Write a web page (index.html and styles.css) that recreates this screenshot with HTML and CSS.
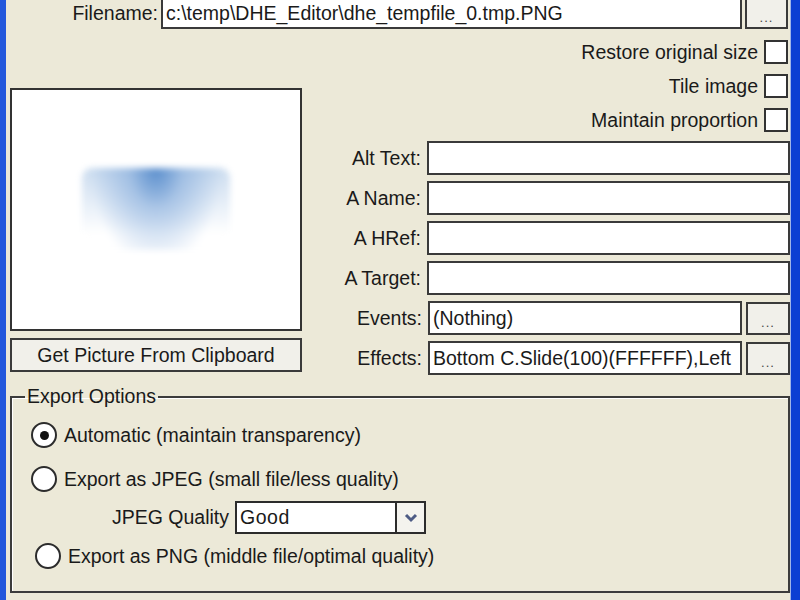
FILE: index.html
```html
<!DOCTYPE html>
<html lang="en">
<head>
    <meta charset="UTF-8">
    <title>Image Properties</title>
    <link rel="stylesheet" href="styles.css">
</head>
<body>
    <div class="window">
        <div class="file-row">
            <label class="lbl file-lbl">Filename:</label>
            <div class="field file-field">c:\temp\DHE_Editor\dhe_tempfile_0.tmp.PNG</div>
            <button class="btn dots">...</button>
        </div>

        <div class="main">
            <div class="left">
                <div class="preview"><div class="thumb"></div></div>
                <button class="btn clip">Get Picture From Clipboard</button>
            </div>

            <div class="right">
                <div class="checks">
                    <label class="check">Restore original size <span class="box"></span></label>
                    <label class="check">Tile image <span class="box"></span></label>
                    <label class="check">Maintain proportion <span class="box"></span></label>
                </div>

                <div class="fields">
                    <div class="frow"><span class="lbl">Alt Text:</span><div class="field"></div></div>
                    <div class="frow"><span class="lbl">A Name:</span><div class="field"></div></div>
                    <div class="frow"><span class="lbl">A HRef:</span><div class="field"></div></div>
                    <div class="frow"><span class="lbl">A Target:</span><div class="field"></div></div>
                    <div class="frow with-btn">
                        <span class="lbl">Events:</span>
                        <div class="field">(Nothing)</div>
                        <button class="btn dots">...</button>
                    </div>
                    <div class="frow with-btn">
                        <span class="lbl">Effects:</span>
                        <div class="field">Bottom C.Slide(100)(FFFFFF),Left</div>
                        <button class="btn dots">...</button>
                    </div>
                </div>
            </div>
        </div>

        <fieldset class="export">
            <legend>Export Options</legend>
            <label class="radio r-auto"><span class="circle checked"></span>Automatic (maintain transparency)</label>
            <label class="radio r-jpeg"><span class="circle"></span>Export as JPEG (small file/less quality)</label>
            <div class="quality">
                <span>JPEG Quality</span>
                <div class="combo">
                    <span class="combo-text">Good</span>
                    <span class="combo-btn">
                        <svg width="14" height="10" viewBox="0 0 14 10"><path d="M2 2 L7 7 L12 2" fill="none" stroke="#4d5b85" stroke-width="3"/></svg>
                    </span>
                </div>
            </div>
            <label class="radio r-png"><span class="circle"></span>Export as PNG (middle file/optimal quality)</label>
        </fieldset>
    </div>
</body>
</html>
```

FILE: styles.css
```css
body {
    margin: 0;
    background: #ece9d8;
    font-family: "Liberation Sans", Arial, sans-serif;
    font-size: 19.5px;
    color: #1a1a1a;
    overflow: hidden;
}
.window {
    height: 600px;
    box-sizing: border-box;
    background: #ece9d8;
    border-left: 6px solid #2358dc;
    border-right: 9px solid #0b3ed3;
    box-shadow: inset -1px 0 0 #9fb4e8;
    padding: 0 1px 0 4px;
    display: flex;
    flex-direction: column;
}

/* shared controls */
.lbl {
    text-align: right;
    white-space: nowrap;
}
.field {
    background: #fff;
    border: 2px solid #3a3a3a;
    box-sizing: border-box;
    height: 33px;
    padding: 0 4px 0 3px;
    display: flex;
    align-items: center;
    white-space: nowrap;
    overflow: hidden;
}
.btn {
    font-family: inherit;
    font-size: 19.5px;
    color: #1a1a1a;
    background: #f1f0ea;
    border: 2px solid #3a3a3a;
    box-sizing: border-box;
    padding: 0;
    margin: 0;
}
.dots {
    width: 44px;
    height: 33px;
    font-size: 13px;
    color: #444;
    letter-spacing: 1px;
    padding-top: 8px;
}

/* filename */
.file-row {
    display: flex;
    align-items: center;
    margin-top: -3px;
    height: 32px;
}
.file-lbl {
    width: 148px;
    margin-right: 3px;
}
.file-field {
    width: 581px;
    height: 32px;
    margin-right: 3px;
}
.file-row .dots {
    height: 31px;
    width: 43px;
}

/* preview + properties */
.main {
    display: grid;
    grid-template-columns: 292px 1fr;
    margin-top: 11px;
}
.left {
    padding-top: 48px;
    display: flex;
    flex-direction: column;
    gap: 7px;
}
.preview {
    height: 243px;
    background: #fff;
    border: 2px solid #333;
    box-sizing: border-box;
    display: flex;
    align-items: center;
    justify-content: center;
}
.thumb {
    width: 148px;
    height: 82px;
    margin-top: -2px;
    border-radius: 10px 10px 16px 16px;
    background:
        radial-gradient(ellipse 45% 120% at 50% 0%, rgba(84, 138, 203, 0.95) 0%, rgba(120, 163, 216, 0.55) 40%, rgba(255, 255, 255, 0) 100%),
        linear-gradient(to bottom, #cbdcef 0%, #e4edf7 40%, #ffffff 80%);
    filter: blur(3px);
}
.clip {
    height: 34px;
    width: 292px;
}

.checks {
    display: flex;
    flex-direction: column;
    align-items: flex-end;
    gap: 10px;
    padding-right: 2px;
}
.check {
    display: flex;
    align-items: center;
    gap: 6px;
    height: 24px;
}
.box {
    width: 24px;
    height: 24px;
    box-sizing: border-box;
    background: #fff;
    border: 2px solid #333;
}

.fields {
    margin-top: 9px;
    display: flex;
    flex-direction: column;
    gap: 6px;
}
.frow {
    display: grid;
    grid-template-columns: 1fr 363px;
    column-gap: 6px;
    align-items: center;
}
.frow.with-btn {
    grid-template-columns: 1fr 314px 44px;
    column-gap: 4px;
}
.frow.with-btn .lbl {
    margin-right: 2px;
}
.frow .field {
    height: 34px;
}

/* export group */
.export {
    margin: 10px 0 0 0;
    padding: 14px 0 0 19px;
    height: 208px;
    box-sizing: border-box;
    border: 2px solid #3c3c3c;
    box-shadow: inset 1px 1px 0 #fff;
    width: 780px;
}
.export legend {
    padding: 0 2px;
    margin-left: -6px;
}
.radio {
    display: flex;
    align-items: center;
    gap: 7px;
    height: 26px;
}
.r-jpeg {
    margin-top: 18px;
}
.r-png {
    margin-top: 9px;
    margin-left: 4px;
}
.circle {
    width: 26px;
    height: 26px;
    box-sizing: border-box;
    border: 2px solid #2c2c2c;
    border-radius: 50%;
    background: #fff;
    display: flex;
    align-items: center;
    justify-content: center;
}
.circle.checked::after {
    content: "";
    width: 9px;
    height: 9px;
    border-radius: 50%;
    background: #111;
}
.quality {
    margin-top: 9px;
    margin-left: 81px;
    display: flex;
    align-items: center;
    gap: 6px;
}
.combo {
    width: 191px;
    height: 33px;
    box-sizing: border-box;
    border: 2px solid #2c2c2c;
    background: #fff;
    display: flex;
}
.combo-text {
    flex: 1;
    padding-left: 3px;
    display: flex;
    align-items: center;
    letter-spacing: 0.5px;
}
.combo-btn {
    width: 27px;
    border-left: 2px solid #2c2c2c;
    background: #f4f3ee;
    display: flex;
    align-items: center;
    justify-content: center;
}
```
